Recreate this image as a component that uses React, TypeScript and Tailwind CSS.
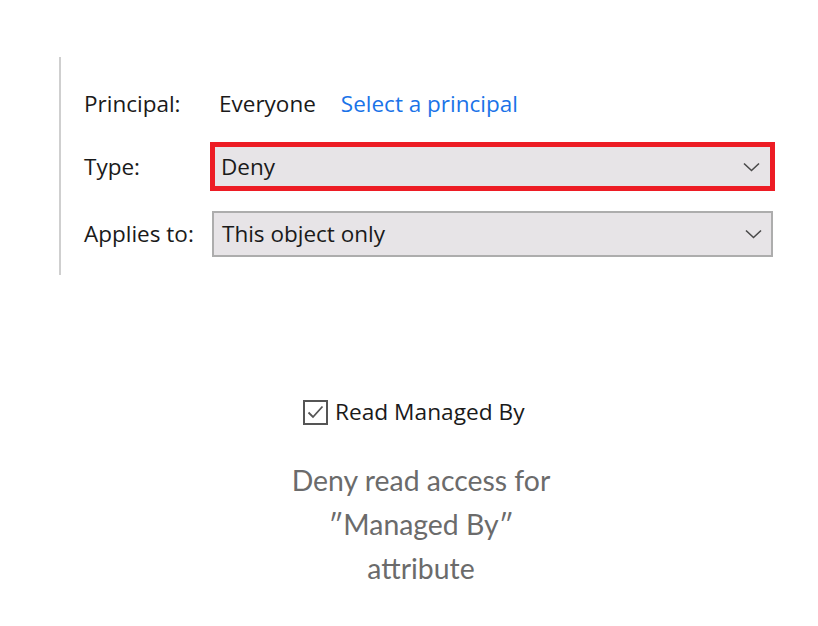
import React from "react";

function Chevron() {
  return (
    <svg width="17" height="10" viewBox="0 0 17 10" className="shrink-0">
      <path d="M1 1.5 L8.5 8.5 L16 1.5" fill="none" stroke="#4a4a4a" strokeWidth="1.6" />
    </svg>
  );
}

function CheckBox() {
  return (
    <div className="w-[25px] h-[25px] border-2 border-[#555] bg-white flex items-center justify-center">
      <svg width="17" height="14" viewBox="0 0 17 14">
        <path d="M1.5 7.5 L6 12 L15.5 1.5" fill="none" stroke="#555" strokeWidth="1.8" />
      </svg>
    </div>
  );
}

export default function App() {
  const ui = { fontFamily: '"Open Sans", "Noto Sans", sans-serif' };
  const desc = { fontFamily: 'Lato, "Open Sans", sans-serif' };

  return (
    <div className="w-[818px] h-[626px] bg-white relative overflow-hidden text-[#1a1a1a]" style={ui}>
      <div className="pt-[57px] pl-[59px]">
        <div className="border-l-2 border-[#cfcfcf] h-[218px] pl-[23px] pt-[31px]">
          <div className="flex items-center h-[32px] text-[22.5px]">
            <span className="w-[135px]">Principal:</span>
            <span>Everyone</span>
            <span className="ml-[25px] text-[#1a73e8]">Select a principal</span>
          </div>

          <div className="flex items-center mt-[22px] text-[22.5px]">
            <span className="w-[126px]">Type:</span>
            <div className="w-[565px] h-[49px] border-[5px] border-[#ed1c24] bg-[#e7e4e7] flex items-center justify-between pl-[6px] pr-[10px]">
              <span>Deny</span>
              <Chevron />
            </div>
          </div>

          <div className="flex items-center mt-[20px] text-[22.5px]">
            <span className="w-[128px]">Applies to:</span>
            <div className="w-[561px] h-[46px] border-2 border-[#adadad] bg-[#e7e4e7] flex items-center justify-between pl-[8px] pr-[9px]">
              <span>This object only</span>
              <Chevron />
            </div>
          </div>
        </div>
      </div>

      <div className="mt-[123px] pl-[303px] flex items-center gap-[7px] h-[28px] text-[22.7px]">
        <CheckBox />
        <span>Read Managed By</span>
      </div>

      <div className="mt-[32px] ml-[291px] w-[260px] text-center text-[28.4px] leading-[44px] text-[#6b6b6b]" style={desc}>
        <div>Deny read access for</div>
        <div>″Managed By″</div>
        <div>attribute</div>
      </div>
    </div>
  );
}
